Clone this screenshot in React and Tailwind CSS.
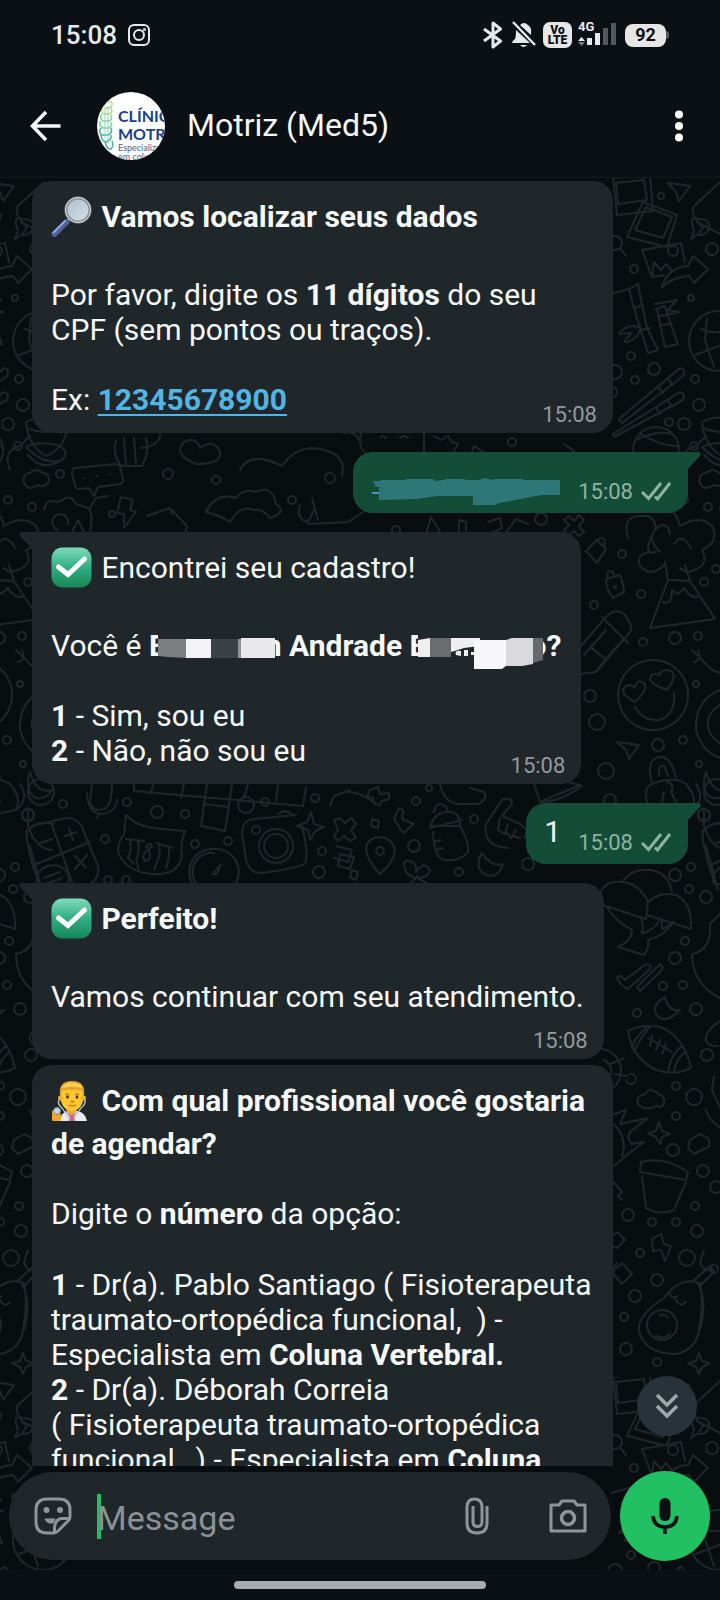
import { useState } from 'react';

const doodlePaths = [
  // photos
  'M613 178L650 175L653 211L617 215ZM616 183L644 180L647 200L618 204Z',
  'M643 202L677 215L667 247L627 237ZM646 207L672 217L663 238L635 230Z',
  'M642 250L681 243L685 262M642 250L652 277L664 275M652 276L654 262L661 270L666 264L671 270',
  // plane, party horn, arrow
  'M668 183L690 186L679 201L676 192Z',
  'M720 182L694 206Q690 213 699 223L722 235M692 224Q690 216 699 219Q711 219 709 228Q707 236 697 235L691 239L694 231ZM697 222L703 227L699 233',
  'M662 287Q668 267 688 266L693 256L708 269L694 283L689 276Q673 277 662 287Z',
  'M611 294L629 289L638 284L642 305L647 328L658 350L648 353L640 328L634 308L629 289M634 308L643 305M641 330L650 328',
  'M656 309L665 306L671 325L678 344L665 347L657 309ZM660 326L671 323M655 304L677 300L668 310L679 312L660 316M619 334Q628 322 641 328Q636 342 624 342L631 333L619 334',
  'M719 311a30 30 0 1 0 .1 0M701 329Q720 338 742 322M695 355L722 345M707 318L705 340L714 367M735 315Q722 340 740 362',
  'M619 419L680 368Q686 369 683 376L622 423ZM613 434L680 392Q686 394 683 400L614 437ZM658 387L663 393M668 379L673 385M656 408L660 414M668 401L672 407',
  'M656 427a23 23 0 1 0 .1 0M636 440Q656 430 672 434M641 434Q660 446 678 446',
  'M702 422Q720 412 744 424Q742 448 722 456Q704 446 702 422ZM703 428Q722 436 743 428',
  'M700 483Q698 474 706 473Q712 467 719 473Q726 473 725 481Q722 488 713 485Q705 492 700 483Z',
  'M620 248L626 256',
  // strip above the second answer
  'M10 470Q2 450 20 446L30 436M26 447Q38 440 60 446Q70 452 62 460Q44 466 26 447ZM28 455Q44 474 64 458',
  'M116 441Q112 456 122 466L142 466Q150 452 146 438M124 438L126 466M134 438L136 466M141 448Q160 446 160 434',
  'M76 468Q72 468 72 473L75 486Q76 489 80 489L89 488L94 496L98 487L120 484Q124 483 123 479L120 467Q119 464 115 464ZM84 478h.1M97 476h.1M110 474h.1',
  'M196 464Q172 454 184 442Q196 436 200 448Q214 438 220 452Q222 464 196 464Z',
  'M240 470Q250 450 282 466Q300 440 330 452Q346 458 342 476',
  'M206 512Q216 492 236 498Q244 488 256 492Q272 484 276 504Q288 512 270 518Q262 508 254 510Q240 504 230 522Q222 516 206 512Z',
  'M44 510Q46 498 58 502L66 498Q72 496 76 504L88 508Q94 514 90 532M58 530a8 8 0 1 1 10 -6M72 532L78 520L84 532M90 508L96 498L108 496',
  'M121 497L133 500L130 510L136 512L124 528L124 514L117 513Z',
  'M147 516L170 508L187 526L184 536L162 533M170 508L172 514',
  'M300 505Q296 520 308 522L314 510M308 524L348 522L366 510M312 498L318 520',
  'M344 433Q354 430 360 441M361 433Q358 450 366 453M424 433V453M381 438Q382 434 386 438M400 438Q404 434 408 438M434 436L441 440L448 436L452 442L458 444L454 451M472 452L474 446L485 453M564 444L574 451',
  'M426 534L431 517L440 532M459 534V520L466 522V530M488 522L500 518L502 528L490 534M506 532L516 519L528 524',
  // locks, volcano, pencil
  'M569 516L574 521L579 515L584 520L579 526L584 532L579 536L574 531L568 535L564 530L569 525L564 520Z',
  'M586 551L597 540L606 549L597 563ZM598 541Q600 535 605 540L604 547M606 579L620 575Q624 586 624 592L613 598Q606 590 606 579ZM608 578Q606 570 611 571Q614 572 614 576',
  'M628 538Q622 516 640 516Q654 514 656 528M664 506Q676 510 680 526Q700 514 712 526Q720 542 702 550Q710 564 694 570Q686 574 680 568M656 528Q640 556 656 552M656 552Q634 552 640 566Q652 578 664 565M660 552Q644 536 660 526Q668 522 670 534M674 544Q682 532 691 548',
  'M665 562L668 580L650 628L715 619L690 581L685 565M668 580L690 581M663 602Q672 606 672 590L678 594L684 588Q690 598 698 597',
  'M580 647L608 615Q616 608 624 614Q634 626 630 632L596 672L580 674ZM602 617L628 643M592 648L606 660M584 655L606 630M596 671L618 645',
  'M653 660a35 35 0 1 0 .1 0M635 707Q644 722 660 720Q676 714 674 692M635 702Q620 694 624 688Q630 682 635 688Q636 680 643 682Q650 688 635 702ZM667 690Q650 684 650 678Q652 672 659 675Q662 668 671 671Q678 676 667 690Z',
  'M720 690Q695 700 696 730Q702 752 720 758M722 704Q706 712 708 728Q712 740 722 744M692 650Q698 656 708 666Q720 678 730 668M694 662Q702 660 698 650',
  'M617 742L639 745L629 759L626 750Z',
  'M648 805Q642 786 654 783Q676 776 686 784Q698 798 692 810M652 782Q646 764 656 758Q670 752 676 778M659 776Q658 764 664 766L668 776M667 782a6 6 0 0 1 4 10L676 802M664 792L662 802',
  'M706 772Q700 792 712 798Q722 800 728 790Q712 794 706 772Z',
  // strip between the second answer and "1"
  'M20 784Q30 800 16 810L-4 814M92 784L90 802Q92 812 104 809Q112 806 112 784M87 793Q88 814 102 814Q116 812 117 800M99 814L97 818',
  'M134 784L134 791L303 806L306 787M154 784L150 794M184 784L181 798M207 784L201 826L225 831L232 784M204 804L228 807M248 784L244 797M278 784L276 801',
  'M27 840Q24 826 40 824L66 818Q80 818 84 832L98 866Q100 878 90 884L40 884Q32 868 27 840ZM52 825L72 882M34 865L90 842M40 843L52 839M65 836L77 832M69 828L73 840M75 856L86 868M87 855L75 869',
  'M38 884a16 14 0 1 1 30 0M44 878L60 872M46 884L62 878',
  'M126 815Q138 828 162 829L185 831Q180 842 182 856Q178 876 152 874Q126 872 118 852Q118 842 124 834ZM126 839L144 841M156 843L173 848M130 841Q132 850 128 858L134 864M138 841Q140 852 136 860L139 870M159 844Q161 854 157 862L154 870M169 848Q170 856 166 868M149 844a3 2 0 1 0 .1 0M147 850Q140 858 146 861Q152 860 149 850Z',
  'M214 849a23 23 0 0 0 -22 34M214 849a23 23 0 0 1 22 34M214 853a19 19 0 0 0 -18 30M213 874L221 864L217 874Z',
  'M242 834Q242 820 254 819L296 815M302 826Q310 858 304 864Q298 868 262 873Q250 874 246 860L242 834M276 829a17 17 0 1 0 .1 0M276 834a12 12 0 1 0 .1 0M278 814Q286 808 292 815',
  'M311 812L314 824L324 827L315 831L310 840L308 830L297 826L307 822Z',
  'M334 820L340 818L345 823L351 818L356 824L351 830L356 838L350 841L344 836L338 841L334 836L338 830Z',
  'M340 854L354 857L350 869L338 866ZM352 870L358 872L356 880L350 877Z',
  'M344 792Q358 790 376 804M330 806L334 796L350 790M370 790L378 787L380 794L389 793L389 799L382 801L380 805L374 804L373 798L367 797Z',
  'M440 784Q444 802 458 804L478 804Q488 800 484 792L470 788M534 784L540 802L580 785L560 780M540 802Q560 802 582 786',
  'M394 819L399 808L403 810L402 819L414 824L403 833L394 819M372 819L379 821L378 828L371 826Z',
  'M430 826Q436 812 446 812Q460 810 460 826ZM434 812Q436 804 440 804Q446 804 448 811M430 828L462 820M433 832Q434 858 444 860Q460 862 468 852Q470 844 460 826M434 842L440 840M436 850L443 848',
  'M486 824L502 800Q512 796 512 804L502 816L520 824Q530 830 524 838M486 824Q482 846 508 848M500 818L498 830L505 834L508 824M506 832L511 838L516 830M512 836L520 838',
  'M380 837Q366 838 366 850Q368 862 380 874Q394 862 395 850Q392 838 380 837ZM380 847a4 4 0 1 0 .1 0',
  'M482 853Q474 866 484 874Q498 880 503 864Q492 868 482 853Z',
  'M404 866Q404 858 412 862Q418 866 416 872Q424 860 430 870Q428 878 418 878L428 884M416 878Q406 876 404 866M410 884L418 876',
  'M336 846L352 850L348 862L334 858',
  // right column, lower half
  'M600 893Q606 880 622 882Q640 884 648 902L646 919L603 905M622 882Q632 868 650 870Q668 872 672 892M648 902Q662 890 678 896Q692 904 691 929L647 915M606 906Q616 922 632 930Q632 940 618 947L644 955Q650 946 648 940Q664 936 674 922M641 918Q644 926 642 933Q652 932 660 920M662 919L662 929Q670 926 672 922',
  'M704 808L704 826Q712 850 728 850M702 832Q712 820 730 824M706 846L718 890',
  'M617 977Q620 974 625 980L646 964Q652 964 650 969L628 989Q620 986 617 977ZM637 987L660 964Q664 966 661 971L640 991Z',
  'M665 997Q652 1004 656 1014Q664 1026 680 1010Q668 1012 665 997Z',
  'M628 1031Q640 1024 660 1027Q684 1036 691 1068Q676 1076 656 1070Q632 1058 628 1031ZM646 1028Q634 1038 632 1048M650 1027Q640 1038 634 1052M686 1052Q676 1058 674 1072M682 1046Q670 1056 668 1072M648 1038L672 1052M652 1036L650 1046M660 1040L656 1050M666 1044L662 1054',
  'M602 1049a22 22 0 0 1 12 38M604 1060a12 12 0 0 1 6 16M610 1064L624 1058M614 1074L628 1076M626 1080a5 5 0 1 0 4 -6',
  'M638 1104Q636 1095 644 1095Q650 1086 658 1094Q666 1096 664 1104Q662 1108 656 1106Q646 1112 638 1104Z',
  'M659 1122L662 1131L670 1134L662 1137L660 1144L656 1137L648 1133L656 1131Z',
  'M614 1114L626 1110L620 1124L648 1118L630 1132Q626 1138 632 1144L644 1142L628 1154L614 1166M614 1124Q628 1140 622 1156',
  'M690 1140L700 1134L708 1138L710 1146L694 1154L688 1148ZM641 1162Q664 1156 688 1172L686 1180L640 1172ZM642 1176L646 1208Q660 1216 674 1210L686 1182',
  'M720 914L710 924Q712 950 692 954Q692 984 720 998M706 1036Q716 1018 730 1020M706 1036Q704 1046 718 1046M714 1076L712 1090L722 1112M706 1110Q712 1126 724 1128',
  'M652 1239L661 1234L664 1244L671 1246L665 1261L661 1250L653 1251Z',
  'M608 1238L618 1232L625 1240L617 1248L610 1246M612 1272L622 1263L632 1274L622 1284ZM613 1268L617 1263',
  'M700 1283Q680 1276 664 1298Q636 1316 639 1332Q646 1354 676 1354Q696 1350 699 1330Q704 1300 700 1283ZM697 1282Q708 1300 700 1330M692 1282L710 1266L714 1272L700 1286M662 1310a15 15 0 1 0 .1 0M670 1294Q672 1300 678 1296M676 1300Q680 1308 686 1302M660 1316Q664 1312 668 1318M656 1336Q664 1340 670 1334',
  'M699 1353L702 1361L710 1363L702 1367L699 1374L696 1367L688 1363L696 1361Z',
  'M612 1180L622 1192L618 1196L622 1200M704 1250L700 1262Q702 1272 714 1270',
];

const doodleDots = [
  [661, 196, 3], [712, 249, 6], [634, 269, 4], [691, 298, 3], [631, 356, 4], [654, 369, 6], [635, 380, 4],
  [695, 379, 4], [699, 405, 6], [669, 422, 4], [684, 424, 6], [694, 446, 4], [512, 442, 4], [708, 507, 4],
  [673, 251, 5], [615, 372, 7], [611, 392, 6], [615, 243, 7], [622, 554, 4], [641, 594, 4], [594, 605, 4],
  [675, 638, 6], [698, 636, 4], [643, 642, 4], [590, 696, 6], [597, 722, 8], [606, 771, 8], [658, 745, 6],
  [683, 740, 4], [696, 684, 3], [699, 764, 3], [610, 800, 6], [704, 582, 4], [615, 587, 1], [716, 569, 4],
  [704, 815, 6], [63, 804, 4], [127, 802, 4], [28, 815, 6], [41, 792, 13], [157, 812, 6], [185, 814, 4],
  [246, 805, 8], [265, 802, 4], [315, 798, 4], [105, 839, 4], [195, 844, 4], [228, 841, 4], [256, 830, 4],
  [322, 851, 4], [319, 872, 6], [416, 801, 4], [429, 788, 3], [474, 819, 4], [414, 846, 6], [528, 864, 6],
  [459, 872, 4], [108, 880, 4], [126, 880, 4], [675, 875, 6], [691, 867, 4], [689, 889, 4], [706, 897, 6],
  [685, 941, 4], [675, 958, 6], [663, 986, 4], [683, 985, 4], [637, 1013, 4], [696, 1009, 6], [707, 1055, 6],
  [676, 1086, 4], [694, 1097, 8], [676, 1116, 4], [673, 1150, 6], [703, 1171, 6], [716, 1187, 6], [695, 1206, 4],
  [628, 1215, 6], [652, 1222, 4], [676, 1222, 4], [697, 1231, 6], [640, 1253, 4], [687, 1258, 8], [657, 1280, 6],
  [635, 1296, 6], [624, 1317, 4], [626, 1349, 6], [657, 1362, 4], [714, 1269, 4], [8, 500, 4], [60, 474, 4],
  [168, 474, 5], [216, 480, 4], [292, 500, 4], [330, 478, 5], [396, 530, 4], [541, 519, 6], [112, 514, 3],
];

function Wallpaper() {
  return (
    <svg aria-hidden="true" className="absolute inset-0 h-full w-full" fill="none" stroke="#1f262a" strokeWidth="2" strokeLinecap="round" strokeLinejoin="round">
      <defs>
        <g id="doodles">
          {doodlePaths.map((d) => <path key={d} d={d} />)}
          {doodleDots.map(([x, y, r]) => <circle key={`${x}-${y}`} cx={x} cy={y} r={r} />)}
        </g>
        <pattern id="wallpaper" width="676" height="1199" patternUnits="userSpaceOnUse">
          <use href="#doodles" x="0" y="-178" />
          <use href="#doodles" x="-676" y="-178" />
        </pattern>
      </defs>
      <rect width="100%" height="100%" fill="url(#wallpaper)" stroke="none" />
    </svg>
  );
}

const emojiClass = 'inline-block h-[41px] w-[41px] mr-0.5 mb-[5px] align-[-15px]';

function SearchEmoji() {
  return (
    <svg viewBox="0 0 41 41" className={emojiClass} role="img" aria-label="lupa">
      <defs>
        <linearGradient id="glass" x1="0" y1="0" x2="1" y2="1">
          <stop offset="0" stopColor="#aebfca" />
          <stop offset="1" stopColor="#d3e2ea" />
        </linearGradient>
      </defs>
      <path d="M14 27L19 22" stroke="#b5b9bd" strokeWidth="3" />
      <path d="M3.500 38L15.500 26" stroke="#50609c" strokeWidth="6" strokeLinecap="round" />
      <path d="M2.500 36.500L14 25" stroke="#93a4d8" strokeWidth="2" strokeLinecap="round" />
      <circle cx="27" cy="14" r="12" fill="url(#glass)" stroke="#8c8f91" strokeWidth="3" />
      <circle cx="27" cy="14" r="12.500" fill="none" stroke="#d9dcdd" strokeWidth="1" />
    </svg>
  );
}

function CheckEmoji() {
  return (
    <svg viewBox="0 0 41 41" className={emojiClass} role="img" aria-label="ok">
      <defs>
        <linearGradient id="check" x1="0" y1="0" x2="0" y2="1">
          <stop offset="0" stopColor="#7edcb9" />
          <stop offset="0.5" stopColor="#30ae82" />
          <stop offset="1" stopColor="#178658" />
        </linearGradient>
      </defs>
      <rect x="0.500" y="0.500" width="40" height="40" rx="11" fill="url(#check)" />
      <path d="M7.500 20L17 27.500L33.500 12" fill="none" stroke="#fff" strokeWidth="5" strokeLinecap="round" strokeLinejoin="miter" />
    </svg>
  );
}

function DoctorEmoji() {
  return (
    <svg viewBox="0 0 41 41" className={emojiClass} role="img" aria-label="profissional de saúde">
      <path d="M9 41Q10 32 17 31H26Q34 32 36 41Z" fill="#e9edf1" />
      <path d="M15 29H26L23 35H18Z" fill="#e9a72b" />
      <path d="M13 31L20 35L27 31L24 41H17Z" fill="#dcd6e2" />
      <path d="M16 33L20 35L25 33L23 37L24 41H18L19 37Z" fill="#c66a8a" />
      <path d="M8 20Q6 24 11 28Q13 32 17 34M34 20Q35 24 30 28Q28 32 24 34" fill="none" stroke="#b7c0c7" strokeWidth="1.500" />
      <ellipse cx="21" cy="17" rx="11.500" ry="14" fill="#fcc832" />
      <circle cx="9.500" cy="18" r="2.500" fill="#eeb02a" />
      <circle cx="32.500" cy="18" r="2.500" fill="#eeb02a" />
      <path d="M9 16Q7 1 21 1Q35 1 33 16L31 11Q21 8 11 11Z" fill="#e8a52c" />
      <path d="M11 8Q14 2 22 3Q30 3 31 8Q21 5 11 8Z" fill="#ffd258" />
      <ellipse cx="16.500" cy="17" rx="1.300" ry="1.800" fill="#3d2a1c" />
      <ellipse cx="26" cy="17" rx="1.300" ry="1.800" fill="#3d2a1c" />
      <path d="M14 14.500Q16.500 13 18.500 14.500M24 14.500Q26 13 28.500 14.500" fill="none" stroke="#a5691b" />
      <path d="M20 21Q21.300 22.500 23 21M18 25Q21.300 27 25 25" fill="none" stroke="#b3601f" strokeWidth="1.200" />
      <path d="M1 40V31L4 29L5 34L9 33L11 36L9 41H2Z" fill="#f5a623" />
      <circle cx="6" cy="31" r="3.500" fill="#c9d4db" stroke="#7a878f" />
    </svg>
  );
}

function DoubleCheck() {
  return (
    <svg viewBox="0 0 30 20" className="h-5 w-[30px]" fill="none" stroke="#8fb3a1" strokeWidth="3" aria-label="entregue">
      <path d="M1 11L7.500 17.500L20 2" />
      <path d="M14 15.500L16.500 18L29 2" />
    </svg>
  );
}

function Received({ tail, children, roomy }) {
  return (
    <article className={`relative max-w-[581px] self-start bg-[#20272a] pr-5 pl-[19px] pt-[15px] text-[30px]/[35px] whitespace-pre-line text-[#f5f8fa] ${tail ? 'rounded-[20px] rounded-tl-none' : 'rounded-[20px]'} ${roomy ? 'pb-[45px]' : 'pb-4'}`}>
      {tail && (
        <svg aria-hidden="true" viewBox="0 0 14 18" className="absolute top-0 -left-[13px] h-[18px] w-3.5" fill="#20272a">
          <path d="M2 0H14V18L1 4Q-1 1 2 0Z" />
        </svg>
      )}
      {children}
      <time className="absolute right-4 bottom-[5px] text-[22px]/[26px] text-[#93999d]">15:08</time>
    </article>
  );
}

function Sent({ children }) {
  return (
    <article className="relative flex h-[61px] self-end rounded-[20px] rounded-tr-none bg-[#144d37] pr-[17px] pl-[18px] text-[30px]/[35px] text-[#f5f8fa]">
      <svg aria-hidden="true" viewBox="0 0 14 18" className="absolute top-0 -right-[13px] h-[18px] w-3.5" fill="#144d37">
        <path d="M12 0H0V18L13 4Q15 1 12 0Z" />
      </svg>
      {children}
      <time className="mt-[27px] text-[22px]/[26px] text-[#8fb3a1]">15:08</time>
      <span className="mt-[29px] ml-2"><DoubleCheck /></span>
    </article>
  );
}

function StatusBar() {
  return (
    <div className="flex h-[70px] shrink-0 items-center pr-[51px] pl-[51px] text-[#e6e9eb]">
      <span className="text-[26px]/[30px] font-medium">15:08</span>
      <svg aria-hidden="true" viewBox="0 0 22 22" className="ml-[11px] h-[22px] w-[22px]" fill="none" stroke="currentColor" strokeWidth="2">
        <rect x="1" y="1" width="20" height="20" rx="5" />
        <circle cx="11" cy="11" r="5" />
        <circle cx="16.500" cy="5.500" r="0.600" />
      </svg>
      <div className="ml-auto flex items-center">
        <svg aria-hidden="true" viewBox="0 0 20 28" className="h-7 w-5" fill="none" stroke="currentColor" strokeWidth="3" strokeLinejoin="round">
          <path d="M1 8L17.500 20L10 26V2L17.500 8L1 20" />
        </svg>
        <svg aria-hidden="true" viewBox="0 0 26 28" className="ml-2 h-7 w-[26px]" fill="currentColor">
          <path d="M9 4Q13 0 17 4Q21 6 20 14L10 5ZM5 9L19 22H1Q1 20 4 18Q5 16 5 9ZM9 24H16Q12.500 28 9 24Z" />
          <path d="M2 1L24 24" stroke="currentColor" strokeWidth="2.400" fill="none" />
        </svg>
        <span className="ml-[6px] flex h-[26px] w-[29px] flex-col items-center justify-center rounded-[7px] bg-[#e6e6e6] text-[12px]/[10px] font-black text-[#0b1014]">
          <span>Vo</span>
          <span>LTE</span>
        </span>
        <span className="relative ml-[6px] h-7 w-[38px]">
          <svg aria-hidden="true" viewBox="0 0 38 28" className="h-7 w-[38px]" fill="currentColor">
            <path d="M0 20L3.500 16L7 20Z" />
            <path d="M0 21L3.500 25L7 21Z" fill="#777b7e" />
            <rect x="9" y="17" width="5" height="7" />
            <rect x="17" y="12" width="5" height="12" />
            <rect x="25" y="7" width="5" height="17" fill="#54585b" />
            <rect x="33" y="2" width="5" height="22" fill="#54585b" />
          </svg>
          <span className="absolute top-0 left-0 text-[13px]/[12px] font-bold">4G</span>
        </span>
        <span className="ml-[9px] flex h-[23px] w-[41px] items-center justify-center rounded-[8px] bg-[#e6e6e6] text-[18px]/[20px] font-bold text-[#0b1014]">92</span>
        <span className="h-2 w-[3px] rounded-r bg-[#54585b]" />
      </div>
    </div>
  );
}

function Avatar() {
  return (
    <div className="relative ml-[35px] h-[68px] w-[68px] shrink-0 overflow-hidden rounded-full bg-white font-[Lato,sans-serif]">
      <svg aria-hidden="true" viewBox="0 0 68 68" className="absolute inset-0 h-[68px] w-[68px]" fill="none" strokeWidth="1.500">
        <path d="M9 10Q16 8 15 13Q14 17 7 16M6 16Q3 20 7 22H13Q16 20 14 16Q13 14 11 17" stroke="#b5dd7c" />
        <path d="M5 22Q2 26 6 29H12Q16 28 14 23M4 29Q1 33 6 36H12Q16 34 14 30" stroke="#7ed49a" />
        <path d="M4 36Q1 40 5 43H11Q16 41 14 36M4 42Q4 49 9 50Q15 48 14 43M8 50Q10 58 14 57Q17 54 15 49" stroke="#41b4a6" />
        <path d="M8 17V46M11 14V52" stroke="#8bd8b4" strokeWidth="1" />
      </svg>
      <div className="absolute top-[15px] left-[21px] text-[16px]/[18px] font-bold whitespace-nowrap text-[#173f8f]">
        <p>CLÍNICA</p>
        <p>MOTRIZ</p>
        <p className="text-[9px]/[9px] font-normal text-[#4c5f86]">Especializada</p>
        <p className="text-[9px]/[9px] font-normal text-[#4c5f86]">em coluna</p>
      </div>
    </div>
  );
}

function Header() {
  return (
    <header className="flex h-[108px] shrink-0 items-center border-b border-[#14191d] pt-1 pr-[29px] pl-[30px]">
      <button type="button" aria-label="Voltar" className="text-[#f5f8fa]">
        <svg viewBox="0 0 32 32" className="h-8 w-8" fill="none" stroke="currentColor" strokeWidth="3.500">
          <path d="M30.500 16H3M16 2L2.500 16L16 30" />
        </svg>
      </button>
      <Avatar />
      <h1 className="ml-[22px] pb-0.5 text-[32px]/[38px] text-[#f5f8fa]">Motriz (Med5)</h1>
      <button type="button" aria-label="Mais opções" className="ml-auto text-white">
        <svg viewBox="0 0 24 32" className="h-8 w-6" fill="currentColor">
          <circle cx="12" cy="4.500" r="4" />
          <circle cx="12" cy="16" r="4" />
          <circle cx="12" cy="27.500" r="4" />
        </svg>
      </button>
    </header>
  );
}

function Composer() {
  const [message, setMessage] = useState('');

  return (
    <form className="relative flex shrink-0 items-center pt-[5px] pr-2.5 pb-[9px] pl-[9px]" onSubmit={(e) => e.preventDefault()}>
      <div className="flex h-[88px] min-w-0 flex-1 items-center rounded-full bg-[#20272a] pr-6 pl-[25px] text-[#8f9699]">
        <button type="button" aria-label="Figurinhas">
          <svg viewBox="0 0 38 38" className="h-[38px] w-[38px]" fill="none" stroke="currentColor" strokeWidth="3">
            <path d="M20 36H13Q2 36 2 25V13Q2 2 13 2H25Q36 2 36 13V20Q36 22 34 24L24 34Q22 36 20 36Z" />
            <path d="M20.500 35V31Q21 22 28 21.500H35" />
            <path d="M11 22H21L19 26Q13 27 11 22Z" fill="currentColor" strokeWidth="1" />
            <circle cx="12.500" cy="13" r="3" fill="currentColor" stroke="none" />
            <circle cx="26" cy="13" r="3" fill="currentColor" stroke="none" />
          </svg>
        </button>
        <span aria-hidden="true" className="ml-[25px] h-[45px] w-1 shrink-0 bg-[#21c063]" />
        <input
          type="text"
          aria-label="Message"
          placeholder="Message"
          className="-ml-1 min-w-0 flex-1 bg-transparent pt-1 text-[34px]/[40px] text-[#f5f8fa] outline-none placeholder:text-[#8b9296]"
          value={message}
          onChange={(e) => setMessage(e.target.value)}
        />
        <button type="button" aria-label="Anexar">
          <svg viewBox="0 0 24 38" className="h-[38px] w-6" fill="none" stroke="currentColor" strokeWidth="3">
            <path d="M22 9V26Q22 36 12 36Q2 36 2 26V10Q2 2 9.500 2Q17 2 17 10V25Q17 29.500 12.500 29.500Q8 29.500 8 25V9" />
          </svg>
        </button>
        <button type="button" aria-label="Câmera" className="ml-[60px]">
          <svg viewBox="0 0 38 34" className="h-[34px] w-[38px]" fill="none" stroke="currentColor" strokeWidth="3" strokeLinejoin="round">
            <path d="M2 6H10L13 2H25L28 6H36V32H2Z" />
            <circle cx="19" cy="19" r="6.500" strokeWidth="3.500" />
          </svg>
        </button>
      </div>
      <button type="button" aria-label="Gravar áudio" className="ml-[9px] flex h-[90px] w-[90px] shrink-0 items-center justify-center rounded-full bg-[#21c063] text-[#0b1014]">
        <svg viewBox="0 0 28 38" className="h-[38px] w-7" fill="none" stroke="currentColor" strokeWidth="3.500">
          <rect x="8.500" y="1" width="11" height="23" rx="5.500" fill="currentColor" stroke="none" />
          <path d="M2 19Q3 30 14 30Q25 30 26 19M14 30V37" />
        </svg>
      </button>
    </form>
  );
}

export default function App() {
  return (
    <div className="flex h-screen flex-col overflow-hidden bg-[#0b1014] font-[Roboto,sans-serif]">
      <StatusBar />
      <Header />
      <div className="relative flex min-h-0 flex-1 flex-col bg-[#080d10]">
        <Wallpaper />
        <main className="relative flex min-h-0 flex-1 flex-col overflow-hidden px-8 pt-[3px] *:shrink-0">
          <div className="flex flex-col">
            <Received>
              <p><SearchEmoji /> <b>Vamos localizar seus dados</b></p>
              <p className="mt-[35px]">Por favor, digite os <b>11 dígitos</b> do seu CPF (sem pontos ou traços).</p>
              <p className="mt-[35px]">Ex: <a href="tel:12345678900" className="font-bold text-[#53b5e4] underline decoration-2 underline-offset-4">12345678900</a></p>
            </Received>
          </div>

          <div className="mt-[19px] flex flex-col">
            <Sent>
              <svg role="img" aria-label="número oculto" viewBox="0 0 190 28" className="mt-[26px] mr-[17px] h-7 w-[190px]">
                <path d="M2 3H8L10 2H34L36 1H62L64 3L72 2L76 1H92L96 2H108L114 0L120 2L124 1H150L154 2H189V17H170L150 21L128 25L124 27H102V18H66L46 21L8 22V9H5Z" fill="#2d7779" />
                <path d="M1 15H8" stroke="#53b5e4" strokeWidth="1.500" />
              </svg>
            </Sent>
          </div>

          <div className="mt-[19px] flex flex-col">
            <Received tail>
              <p><CheckEmoji /> Encontrei seu cadastro!</p>
              <p className="mt-[35px] whitespace-nowrap">
                Você é <b>E<svg role="img" aria-label="nome oculto" viewBox="0 0 117 24" className="relative -mr-2.5 -ml-2 inline-block h-6 w-[117px] align-[-3px]">
                  <path d="M0 0H117V24H0Z" fill="#20272a" />
                  <path d="M0 4H28V23L10 22L0 21Z" fill="#7d7e82" />
                  <path d="M28 4H53V23H28Z" fill="#f3f3f7" />
                  <path d="M53 4H80V23H53Z" fill="#3c4145" />
                  <path d="M80 4H83V23H80Z" fill="#929396" />
                  <path d="M83 3H117V23H83Z" fill="#e9e9eb" />
                </svg>n Andrade E<svg role="img" aria-label="sobrenome oculto" viewBox="0 0 125 36" className="relative -mr-3.5 -mb-2 -ml-2 inline-block h-9 w-[125px] align-[-6px]">
                  <path d="M0 0H125V26H0Z" fill="#20272a" />
                  <path d="M0 6L12 4V23H0Z" fill="#eeeef1" />
                  <path d="M12 4H33V23H12Z" fill="#6b6c70" />
                  <path d="M33 4H62V12L46 14L40 16L33 18Z" fill="#eeeef1" />
                  <path d="M38 21Q36 16 43 17V22ZM46 16H50V22H46ZM53 18h3v3h-3z" fill="#eeeef1" />
                  <path d="M56 6H88V32L84 35H56Z" fill="#f7f7fa" />
                  <path d="M88 6L94 4H115V30L104 32H88Z" fill="#dadade" />
                  <path d="M115 4H125V26L115 29Z" fill="#66686c" />
                </svg>o?</b>
              </p>
              <p className="mt-[35px]"><b>1</b> - Sim, sou eu</p>
              <p><b>2</b> - Não, não sou eu</p>
            </Received>
          </div>

          <div className="mt-[19px] flex flex-col">
            <Sent>
              <p className="mt-[11px] mr-[17px]">1</p>
            </Sent>
          </div>

          <div className="mt-[19px] flex flex-col">
            <Received tail roomy>
              <p><CheckEmoji /> <b>Perfeito!</b></p>
              <p className="mt-[35px]">Vamos continuar com seu atendimento.</p>
            </Received>
          </div>

          <div className="mt-1.5 flex flex-col">
            <Received>
              <p><DoctorEmoji /> <b>Com qual profissional você gostaria de agendar?</b></p>
              <p className="mt-[35px]">Digite o <b>número</b> da opção:</p>
              <p className="mt-[36px]"><b>1</b> - Dr(a). Pablo Santiago (&nbsp;Fisioterapeuta traumato-ortopédica funcional,&nbsp;&nbsp;)&nbsp;- Especialista em <b>Coluna Vertebral.</b></p>
              <p><b>2</b> - Dr(a). Déborah Correia (&nbsp;Fisioterapeuta traumato-ortopédica funcional,&nbsp;&nbsp;)&nbsp;- Especialista em <b>Coluna</b></p>
            </Received>
          </div>

          <button type="button" aria-label="Ir para o fim" className="absolute right-[23px] bottom-[30px] flex h-[60px] w-[60px] items-center justify-center rounded-full bg-[#283238] text-[#a0a7ab]">
            <svg viewBox="0 0 24 26" className="h-[26px] w-6" fill="none" stroke="currentColor" strokeWidth="3.500">
              <path d="M2 2L12 12L22 2M2 13L12 23L22 13" />
            </svg>
          </button>
        </main>
        <Composer />
      </div>
      <div className="flex h-[30px] shrink-0 items-center justify-center">
        <div className="h-2 w-[252px] rounded-full bg-[#a9adaf]" />
      </div>
    </div>
  );
}
